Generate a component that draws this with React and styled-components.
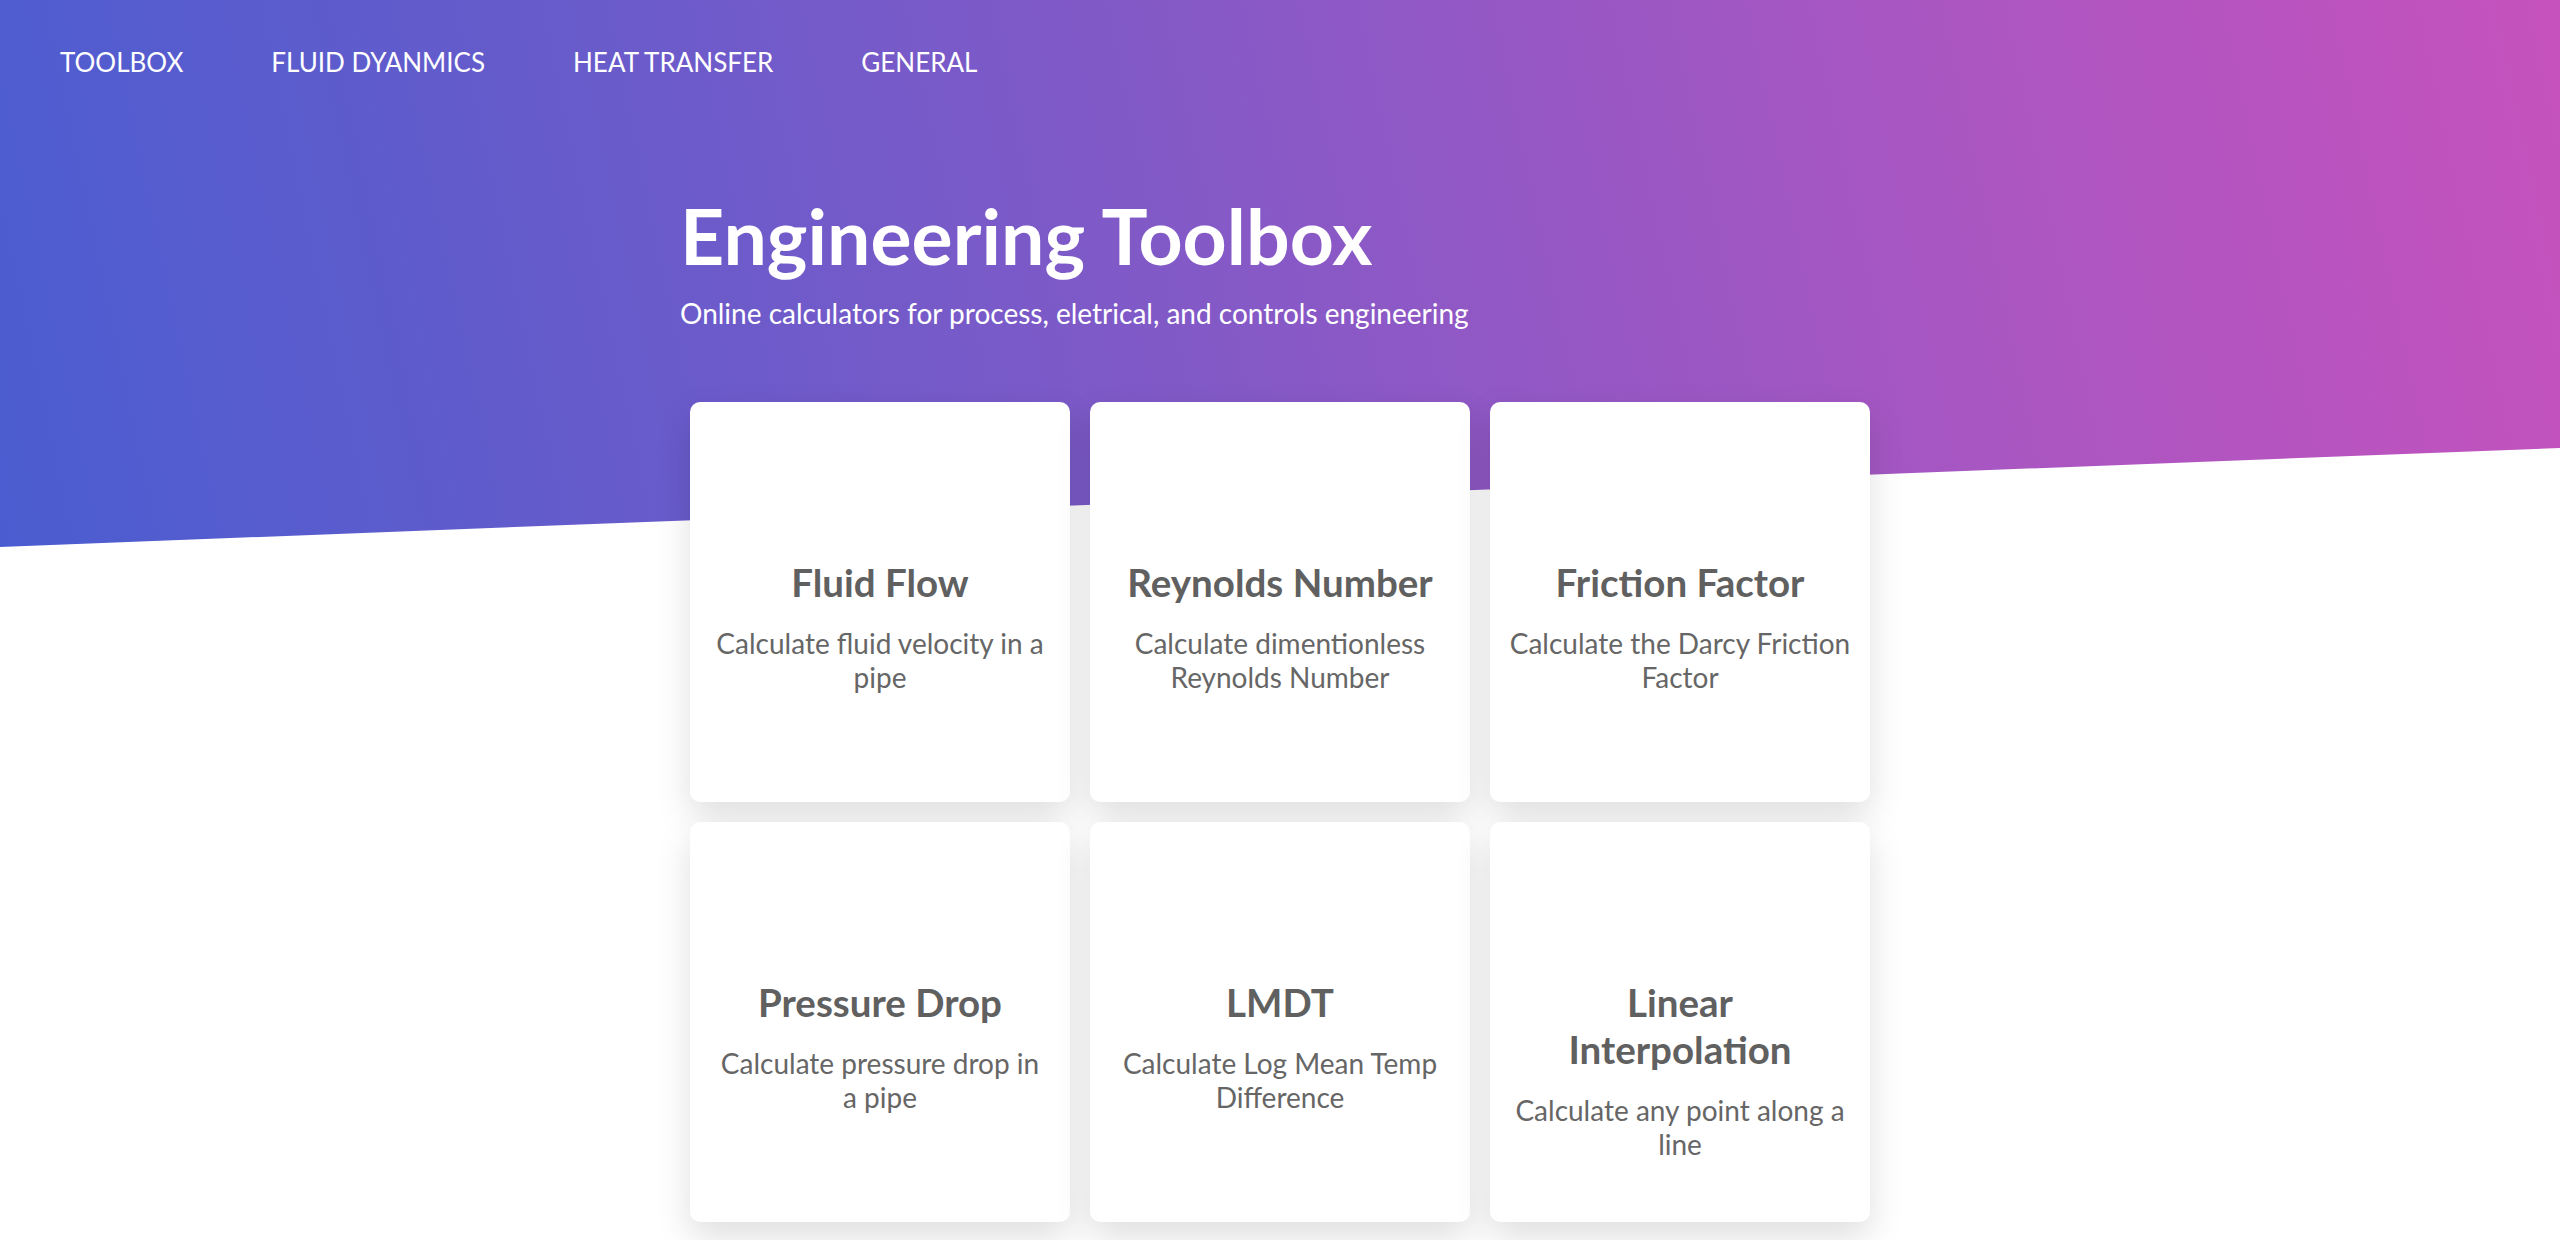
import React from 'react'
import styled, { createGlobalStyle } from 'styled-components'

const GlobalStyle = createGlobalStyle`
  html, body {
    margin:0;
    padding:0;
    background:#fff;
    font-family:Lato, "Open Sans", sans-serif;
  }
`

const Page = styled.div`
  position:relative;
  min-height:1240px;
  overflow:hidden;

  &::before {
    content:'';
    position:absolute;
    top:0;
    left:0;
    right:0;
    height:547px;
    background:linear-gradient(78deg, #4a5dd0 0%, #7a5ac8 40%, #a257c3 70%, #c652bd 100%);
    clip-path:polygon(0 0, 100% 0, 100% 448px, 0 547px);
  }
`

const Nav = styled.nav`
  position:relative;
  display:flex;
  align-items:center;
  height:124px;
  padding:0 16px;
`

const NavLink = styled.a`
  padding:0 44px;
  color:#fff;
  font-size:26px;
  text-transform:uppercase;
  text-decoration:none;
  cursor:pointer;
`

const Container = styled.main`
  position:relative;
  width:1200px;
  margin:0 auto;
`

const Title = styled.h1`
  margin:0;
  padding-top:65px;
  color:#fff;
  font-size:77px;
  line-height:92px;
  font-weight:700;
`

const Subtitle = styled.p`
  margin:15px 0 0;
  color:#fff;
  font-size:28px;
  line-height:34px;
`

const Grid = styled.div`
  display:grid;
  grid-template-columns:repeat(3, 380px);
  gap:20px;
  padding:0 10px;
  margin-top:72px;
`

const Card = styled.a`
  display:flex;
  flex-direction:column;
  align-items:center;
  box-sizing:border-box;
  height:400px;
  padding:157px 18px 0;
  background:#fff;
  border-radius:10px;
  box-shadow:0 15px 35px rgba(0,0,0,0.13);
  text-align:center;
  color:#666;
  cursor:pointer;
`

const CardTitle = styled.h2`
  margin:0;
  max-width:320px;
  font-size:38.5px;
  line-height:47px;
  font-weight:700;
  color:#606060;
`

const CardText = styled.p`
  margin:20px 0 0;
  font-size:28px;
  line-height:34px;
  color:#666;
`

const links = ["Toolbox", "Fluid Dyanmics", "Heat Transfer", "General"]

const tools = [
  { title:"Fluid Flow", text:"Calculate fluid velocity in a pipe" },
  { title:"Reynolds Number", text:"Calculate dimentionless Reynolds Number" },
  { title:"Friction Factor", text:"Calculate the Darcy Friction Factor" },
  { title:"Pressure Drop", text:"Calculate pressure drop in a\u00a0pipe" },
  { title:"LMDT", text:"Calculate Log Mean Temp Difference" },
  { title:"Linear Interpolation", text:"Calculate any point along a line" }
]

export default function App(){
  return (
    <>
      <GlobalStyle />
      <Page>
        <Nav>
          {links.map(l => <NavLink key={l}>{l}</NavLink>)}
        </Nav>
        <Container>
          <Title>Engineering Toolbox</Title>
          <Subtitle>Online calculators for process, eletrical, and controls engineering</Subtitle>
          <Grid>
            {tools.map(t => (
              <Card key={t.title}>
                <CardTitle>{t.title}</CardTitle>
                <CardText>{t.text}</CardText>
              </Card>
            ))}
          </Grid>
        </Container>
      </Page>
    </>
  )
}
